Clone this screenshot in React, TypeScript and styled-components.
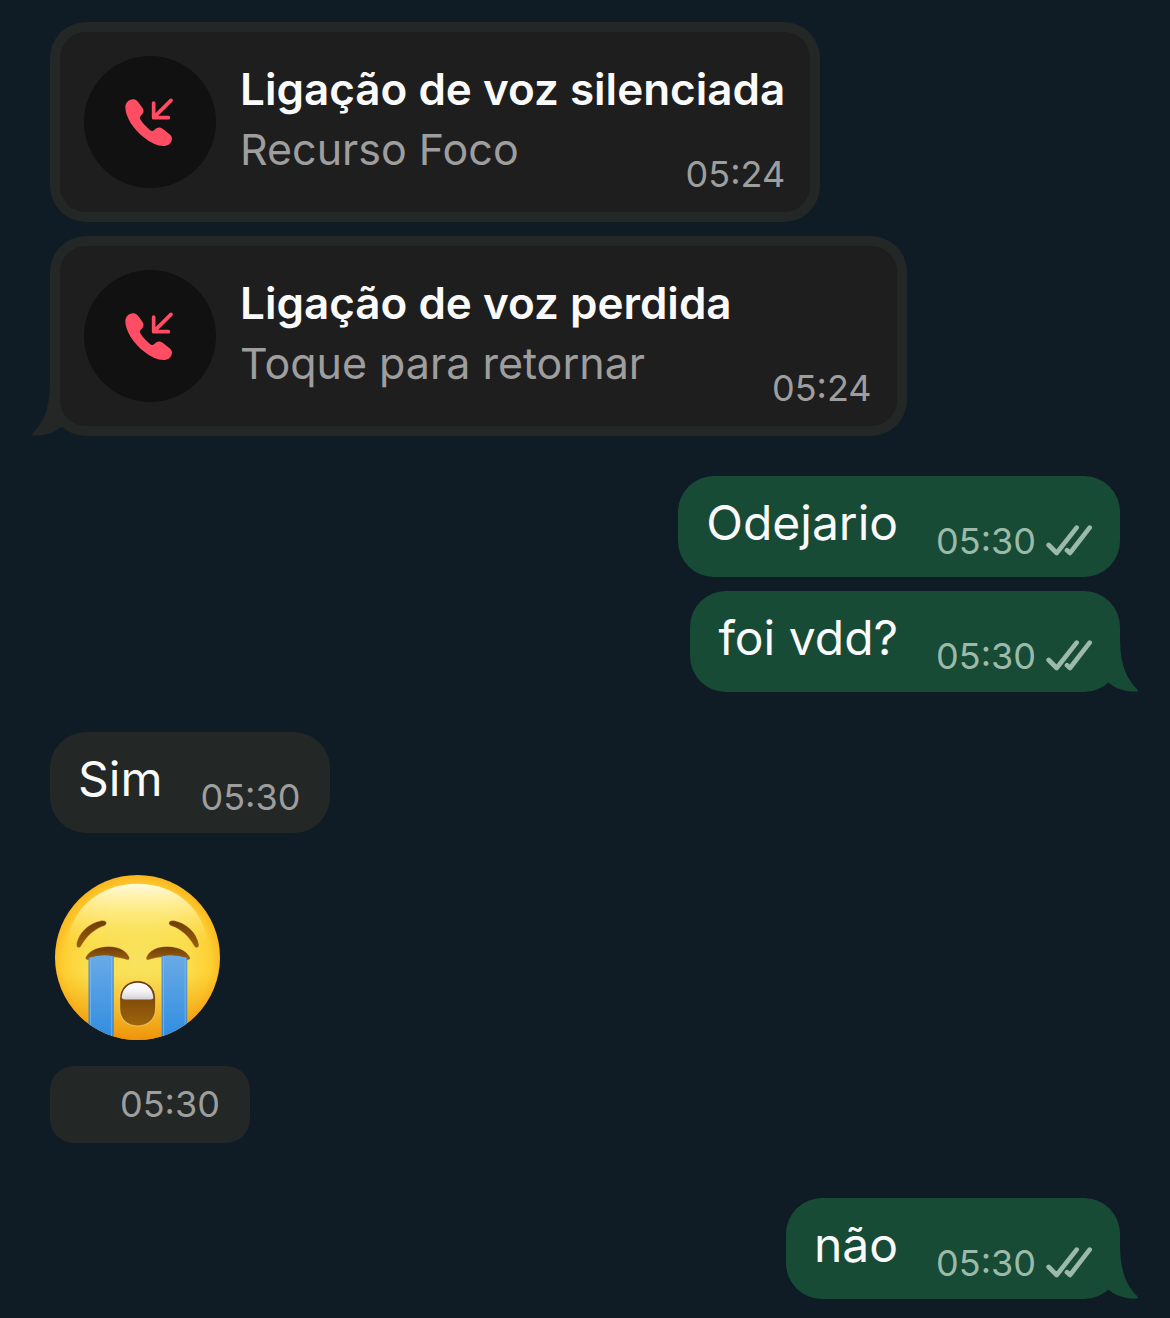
import React from 'react';
import styled, { createGlobalStyle } from 'styled-components';

const colors = {
  wallpaper: '#0f1c26',
  incoming: '#232726',
  outgoing: '#174b36',
  card: '#1e1e1e',
  disc: '#111111',
  missed: '#ff4d64',
  white: '#fafafa',
  muted: '#9e9e9e',
  mutedGreen: '#9cbaaa',
};

const GlobalStyle = createGlobalStyle`
  body {
    margin: 0;
    background-color: ${colors.wallpaper};
    font-family: Inter, 'Liberation Sans', sans-serif;
  }
`;

const Chat = styled.main`
  display: flex;
  flex-direction: column;
  gap: 40px;
  padding: 22px 50px 18px;
`;

const Group = styled.section<{ $side: Side; $gap?: number }>`
  display: flex;
  flex-direction: column;
  align-items: ${({ $side }) => ($side === 'out' ? 'flex-end' : 'flex-start')};
  gap: ${({ $gap }) => $gap ?? 14}px;
`;

const BubbleBox = styled.article<{ $side: Side }>`
  position: relative;
  display: flex;
  gap: 38px;
  padding: 17px ${({ $side }) => ($side === 'out' ? 28 : 30)}px 11px 28px;
  border-radius: 36px;
  background-color: ${({ $side }) => ($side === 'out' ? colors.outgoing : colors.incoming)};
`;

const Text = styled.p`
  margin: 0 0 13px;
  font-size: 48px;
  line-height: 60px;
  color: ${colors.white};
`;

const Meta = styled.div`
  display: flex;
  align-items: center;
  align-self: flex-end;
  gap: 10px;
`;

const Time = styled.time<{ $side?: Side }>`
  font-size: 36px;
  line-height: 50px;
  color: ${({ $side }) => ($side === 'out' ? colors.mutedGreen : colors.muted)};
`;

const TailSvg = styled.svg<{ $side: Side }>`
  position: absolute;
  bottom: 0;
  ${({ $side }) => ($side === 'out' ? 'right: -20px;' : 'left: -20px; transform: scaleX(-1);')}
  fill: ${({ $side }) => ($side === 'out' ? colors.outgoing : colors.incoming)};
`;

const CallBubble = styled.article`
  position: relative;
  padding: 10px;
  border-radius: 36px;
  background-color: ${colors.incoming};
`;

const CallCard = styled.button`
  position: relative;
  z-index: 1;
  display: flex;
  align-items: flex-start;
  gap: 24px;
  padding: 24px 25px 13px 24px;
  border: 0;
  border-radius: 26px;
  background-color: ${colors.card};
  font-family: inherit;
  text-align: left;
  cursor: pointer;
`;

const Disc = styled.span`
  display: flex;
  align-items: center;
  justify-content: center;
  width: 132px;
  height: 132px;
  border-radius: 50%;
  background-color: ${colors.disc};
`;

const CallBody = styled.span`
  display: flex;
  flex-direction: column;
  padding-top: 3px;
`;

const CallTitle = styled.strong`
  font-size: 44px;
  font-weight: 600;
  line-height: 60px;
  color: ${colors.white};
`;

const CallFooter = styled.span`
  display: flex;
  align-items: flex-end;
  justify-content: space-between;
  gap: 127px;
`;

const CallHint = styled.span`
  padding-bottom: 20px;
  font-size: 43px;
  line-height: 60px;
  color: ${colors.muted};
`;

const StickerSvg = styled.svg`
  display: block;
  margin: 2px 0 0 5px;
`;

const Stamp = styled.div`
  display: flex;
  padding: 13px 30px 14px 70px;
  border-radius: 24px;
  background-color: ${colors.incoming};
`;

const LastGroup = styled(Group)`
  margin-top: 15px;
`;

type Side = 'in' | 'out';

const Tail: React.FC<{ side: Side }> = ({ side }) => (
  <TailSvg $side={side} width="40" height="56" viewBox="0 0 40 56" aria-hidden="true">
    <path d="M2 0H20C20 24 24 40 37 53Q39 55 37 55.500C26 56 16 53 9 47L2 44Z" />
  </TailSvg>
);

const Ticks: React.FC = () => (
  <svg width="46" height="32" viewBox="49 75 138 96" role="img" aria-label="Entregue">
    <g fill="none" stroke={colors.mutedGreen} strokeWidth="14" strokeLinecap="round" strokeLinejoin="round">
      <path d="M57 135L81 159L141 83" />
      <path d="M112 151L121 159L180 83" />
    </g>
  </svg>
);

const MissedCallIcon: React.FC = () => (
  <svg width="50" height="50" viewBox="75 82 150 150" aria-hidden="true">
    <path
      fill={colors.missed}
      d="M98 89C87 90 77 98 76 112C76 140 98 178 135 206C155 221 175 230 193 229C206 228 215 219 216 207C216 199 211 195 204 190L190 179C182 173 176 172 169 176L160 183C156 185 153 183 149 180C138 171 128 161 121 149C119 145 119 142 122 139L128 132C132 126 131 121 128 116L115 98C110 91 105 88 98 89Z"
    />
    <path
      fill="none"
      stroke={colors.missed}
      strokeWidth="11"
      strokeLinecap="round"
      strokeLinejoin="round"
      d="M161 100V144H205M161 144L213 92"
    />
  </svg>
);

const CryingFace: React.FC = () => (
  <StickerSvg width="165" height="165" viewBox="0 0 492 492" role="img" aria-label="Rosto chorando muito">
    <defs>
      <radialGradient id="face" cx="246" cy="256" r="256" gradientUnits="userSpaceOnUse">
        <stop offset="0" stopColor="#f8e25e" />
        <stop offset="0.6" stopColor="#fbdd4b" />
        <stop offset="0.85" stopColor="#fdd034" />
        <stop offset="1" stopColor="#fbb51c" />
      </radialGradient>
      <linearGradient id="shade" x1="0" y1="0" x2="0" y2="1">
        <stop offset="0.6" stopColor="#ee8c00" stopOpacity="0" />
        <stop offset="1" stopColor="#e98300" stopOpacity="0.75" />
      </linearGradient>
      <linearGradient id="gloss" x1="0" y1="0" x2="0" y2="1">
        <stop offset="0" stopColor="#fffbdc" />
        <stop offset="0.2" stopColor="#fff4a8" stopOpacity="0.7" />
        <stop offset="0.5" stopColor="#fde868" stopOpacity="0" />
      </linearGradient>
      <linearGradient id="tear" x1="0" y1="0" x2="0" y2="1">
        <stop offset="0" stopColor="#6aaae6" />
        <stop offset="1" stopColor="#2f8ce0" />
      </linearGradient>
      <linearGradient id="mouth" x1="0" y1="0" x2="0" y2="1">
        <stop offset="0" stopColor="#663205" />
        <stop offset="0.5" stopColor="#87500a" />
        <stop offset="1" stopColor="#9d650b" />
      </linearGradient>
      <linearGradient id="teeth" x1="0" y1="0" x2="0" y2="1">
        <stop offset="0" stopColor="#ffffff" />
        <stop offset="0.5" stopColor="#f4f4f6" />
        <stop offset="1" stopColor="#d2d2dc" />
      </linearGradient>
      <linearGradient id="brow" x1="0" y1="0" x2="0" y2="1">
        <stop offset="0" stopColor="#6f3b06" />
        <stop offset="1" stopColor="#9a600d" />
      </linearGradient>
      <clipPath id="head">
        <circle cx="246" cy="246" r="246" />
      </clipPath>
    </defs>
    <g clipPath="url(#head)">
      <rect width="492" height="492" fill="url(#face)" />
      <rect width="492" height="492" fill="url(#shade)" />
      <ellipse cx="246" cy="206" rx="206" ry="180" fill="url(#gloss)" />
      <g fill="url(#brow)" stroke="#ffeb7c" strokeOpacity="0.5" strokeWidth="2">
        <path d="M64 207C69 174 101 142 140 136C154 135 158 146 148 151C119 160 94 182 78 212C73 221 63 217 64 207Z" />
        <path d="M429 207C424 174 392 142 353 136C339 135 335 146 345 151C374 160 399 182 415 212C420 221 430 217 429 207Z" />
        <path d="M92 244C104 223 131 213 160 213C190 213 212 225 221 244C225 254 218 255 209 251C176 241 140 241 105 251C95 256 88 252 92 244Z" />
        <path d="M402 244C390 223 363 213 334 213C304 213 282 225 273 244C269 254 276 255 285 251C318 241 354 241 389 251C399 256 406 252 402 244Z" />
      </g>
      <path fill="url(#tear)" d="M101 247Q137 235 174 242V492H101Z" />
      <path fill="url(#tear)" d="M393 247Q357 235 319 242V492H393Z" />
      <g fill="none" stroke="#83bdf0" strokeWidth="2">
        <path d="M106 247V492M169 243V492M324 243V492M388 247V492" />
      </g>
      <g fill="none" stroke="#4384bd" strokeWidth="2">
        <path d="M101 247V492M174 243V492M319 243V492M393 247V492" />
      </g>
      <path
        fill="url(#mouth)"
        stroke="#ffe78a"
        strokeOpacity="0.6"
        strokeWidth="3"
        d="M193 370C193 335 216 315 246 315C277 315 300 335 300 370V397C300 430 278 450 246 450C215 450 193 430 193 397Z"
      />
      <path
        fill="url(#teeth)"
        d="M199 363C202 336 221 321 246 321C272 321 290 336 293 363C294 369 291 371 285 371H208C201 371 199 369 199 363Z"
      />
    </g>
  </StickerSvg>
);

interface CallProps {
  title: string;
  hint: string;
  time: string;
  tail?: boolean;
}

const Call: React.FC<CallProps> = ({ title, hint, time, tail }) => (
  <CallBubble>
    {tail && <Tail side="in" />}
    <CallCard type="button">
      <Disc>
        <MissedCallIcon />
      </Disc>
      <CallBody>
        <CallTitle>{title}</CallTitle>
        <CallFooter>
          <CallHint>{hint}</CallHint>
          <Time>{time}</Time>
        </CallFooter>
      </CallBody>
    </CallCard>
  </CallBubble>
);

interface MessageProps {
  side: Side;
  text: string;
  time: string;
  tail?: boolean;
}

const Message: React.FC<MessageProps> = ({ side, text, time, tail }) => (
  <BubbleBox $side={side}>
    {tail && <Tail side={side} />}
    <Text>{text}</Text>
    <Meta>
      <Time $side={side}>{time}</Time>
      {side === 'out' && <Ticks />}
    </Meta>
  </BubbleBox>
);

const App: React.FC = () => {
  return (
    <>
      <GlobalStyle />
      <Chat>
        <Group $side="in">
          <Call title="Ligação de voz silenciada" hint="Recurso Foco" time="05:24" />
          <Call title="Ligação de voz perdida" hint="Toque para retornar" time="05:24" tail />
        </Group>
        <Group $side="out">
          <Message side="out" text="Odejario" time="05:30" />
          <Message side="out" text="foi vdd?" time="05:30" tail />
        </Group>
        <Group $side="in">
          <Message side="in" text="Sim" time="05:30" />
        </Group>
        <Group $side="in" $gap={26}>
          <CryingFace />
          <Stamp>
            <Time>05:30</Time>
          </Stamp>
        </Group>
        <LastGroup $side="out">
          <Message side="out" text="não" time="05:30" tail />
        </LastGroup>
      </Chat>
    </>
  );
};

export default App;
